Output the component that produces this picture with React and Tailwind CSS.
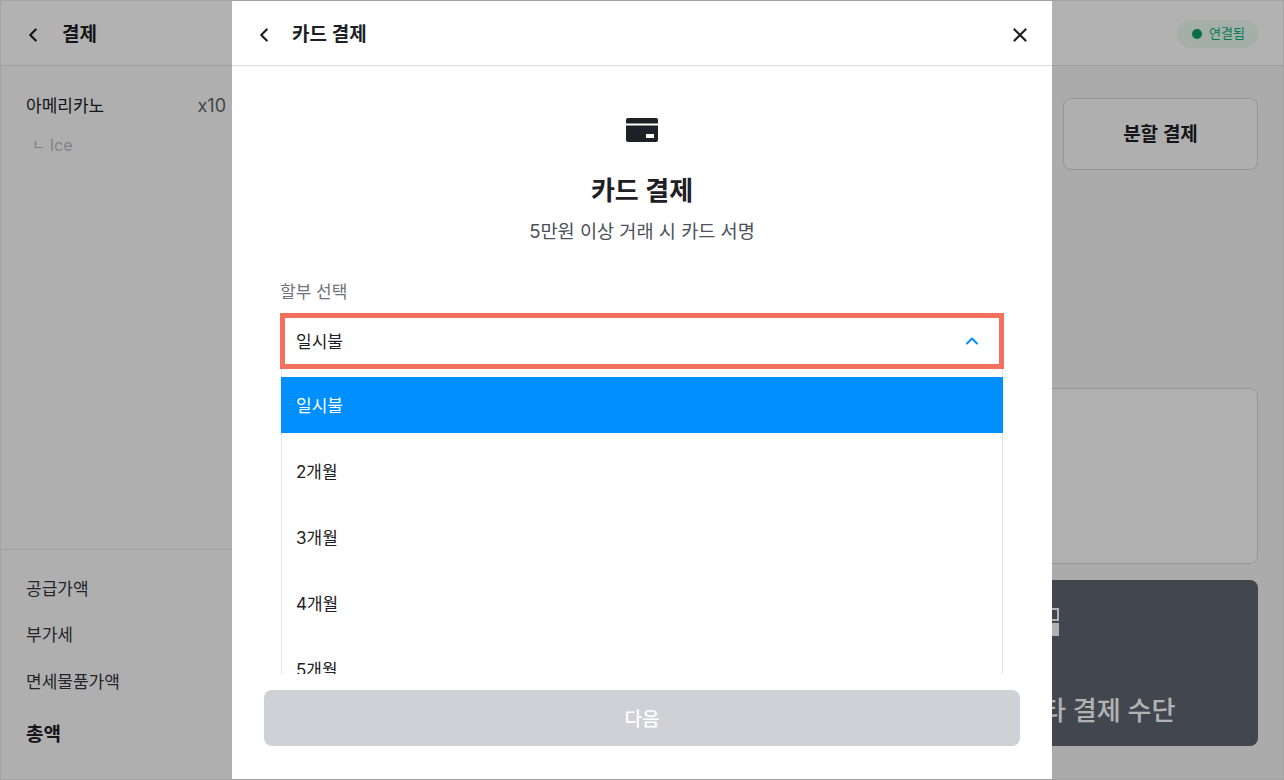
import React from 'react';
import { ChevronLeft, ChevronUp, X } from 'lucide-react';

const FONT = "font-['Inter','Noto_Sans_CJK_KR',sans-serif]";

const months = ['2개월', '3개월', '4개월', '5개월'];

const CardIcon = () => (
  <svg width="32" height="24" viewBox="0 0 32 24" className="block">
    <rect width="32" height="24" rx="2" fill="#1e2025" />
    <rect y="5.5" width="32" height="2" fill="#fff" />
    <rect x="20" y="16" width="8" height="4" fill="#fff" />
  </svg>
);

const OtherIcon = () => (
  <svg width="41" height="28" viewBox="0 0 41 28" className="block">
    <path d="M1 1h39v11H1z" fill="none" stroke="#fff" strokeWidth="2" />
    <rect y="15" width="41" height="13" fill="#fff" />
  </svg>
);

const Background = () => (
  <div className="flex h-full flex-col bg-[#f5f5f5]">
    <div className="flex h-[65px] shrink-0 items-center justify-between border-b border-[#e2e2e2] bg-white pl-[21px] pr-[25px] pt-px">
      <div className="flex items-center gap-[18px] pt-[2px]">
        <ChevronLeft size={22} strokeWidth={2.4} className="text-[#1e2025]" />
        <span className="pt-[2px] text-[19px] font-semibold text-[#1e2025]">결제</span>
      </div>
      <div className="flex h-7 w-[81px] items-center gap-[7px] rounded-full bg-[#ecfbf3] pl-[15px] text-[13px] text-[#0faf78]">
        <span className="h-[10px] w-[10px] rounded-full bg-[#0b9e6a]" />
        연결됨
      </div>
    </div>
    <div className="flex min-h-0 flex-1">
      <div className="flex w-[300px] shrink-0 flex-col bg-[#fbfbfb]">
        <div className="flex-1 pl-[25px] pr-[75px] pt-[28px]">
          <div className="flex items-center justify-between text-[17px] leading-6 text-[#1e2025]">
            <span>아메리카노</span>
            <span className="text-[18px] text-[#60646c]">x10</span>
          </div>
          <div className="mt-[15px] flex items-center gap-[4px] pl-[6px] text-[16px] leading-6 text-[#b8bac0]">
            <span className="text-[15px]">ㄴ</span>
            <span>Ice</span>
          </div>
        </div>
        <div className="flex flex-col border-t border-[#e2e2e2] pl-[25px] pt-[27px] pb-[30px]">
          <span className="text-[17px] leading-6 text-[#33363d]">공급가액</span>
          <span className="mt-[22px] text-[17px] leading-6 text-[#33363d]">부가세</span>
          <span className="mt-[23px] text-[17px] leading-6 text-[#33363d]">면세물품가액</span>
          <span className="mt-[27px] text-[19px] font-semibold leading-7 text-[#1e2025]">총액</span>
        </div>
      </div>
      <div className="flex min-w-0 flex-1 flex-col pl-[24px] pr-[25px] pt-[32px] pb-[32px]">
        <div className="flex justify-end">
          <div className="flex h-[72px] w-[195px] items-center justify-center rounded-lg border border-[#d5d7db] bg-[#fbfbfb] pt-[2px] text-[19px] font-semibold text-[#1e2025]">
            분할 결제
          </div>
        </div>
        <div className="mt-[218px] h-[176px] rounded-lg border border-[#d5d7db] bg-[#fcfcfc]" />
        <div className="mt-4 flex h-[166px] flex-col justify-between rounded-lg bg-[#5f6571] pb-[17px] pl-[693px] pt-[28px] text-white">
          <OtherIcon />
          <span className="whitespace-nowrap text-[26px] font-medium leading-9">기타 결제 수단</span>
        </div>
      </div>
    </div>
  </div>
);

const App = () => {
  return (
    <div className={`h-[780px] w-[1284px] overflow-hidden border border-[#a3a3a3] ${FONT}`}>
      <div className="relative h-full w-full overflow-hidden">
        <Background />
        <div className="absolute inset-0 bg-black/30" />
        <div className="absolute bottom-0 left-[231px] top-0 flex w-[820px] flex-col bg-white">
          <div className="flex h-[65px] shrink-0 items-center justify-between border-b border-[#dcdcdc] pl-[21px] pr-[21px] pt-[3px]">
            <div className="flex items-center gap-[17px]">
              <ChevronLeft size={22} strokeWidth={2.4} className="text-[#1e2025]" />
              <span className="pt-[2px] text-[19px] font-semibold text-[#1e2025]">카드 결제</span>
            </div>
            <X size={22} strokeWidth={2.4} className="text-[#1e2025]" />
          </div>

          <div className="min-h-0 flex-1 overflow-hidden px-12 pt-[52px]">
            <div className="flex flex-col items-center">
              <CardIcon />
              <h2 className="mt-[31px] text-[26px] font-semibold leading-9 text-[#1e2025]">카드 결제</h2>
              <p className="mt-[8px] text-[18.6px] leading-7 text-[#4d5159]">5만원 이상 거래 시 카드 서명</p>
            </div>
            <div className="mt-[35px] text-[17px] leading-6 text-[#6f737a]">할부 선택</div>
            <div className="mt-[9px] flex h-[56px] items-center justify-between border-[5px] border-[#f3705f] pl-[11px] pr-[17px] text-[17px] text-[#1e2025]">
              <span className="pt-[4px]">일시불</span>
              <ChevronUp size={20} strokeWidth={2.4} className="text-[#008fff]" />
            </div>
            <div className="mx-px border border-t-0 border-[#e5e7eb] pt-[8px] text-[17px] text-[#1e2025]">
              <div className="-mx-px flex h-14 items-center bg-[#008fff] pl-[15px] pt-[4px] text-white">일시불</div>
              {months.map((m) => (
                <div key={m} className="mt-[10px] flex h-14 items-center pl-[14px] pt-[4px]">{m}</div>
              ))}
            </div>
          </div>

          <div className="shrink-0 px-8 pb-[33px] pt-4">
            <button className="flex h-14 w-full items-center justify-center rounded-lg bg-[#cfd1d6] pt-[4px] text-[19px] font-medium text-white">
              다음
            </button>
          </div>
        </div>
      </div>
    </div>
  );
};

export default App;
